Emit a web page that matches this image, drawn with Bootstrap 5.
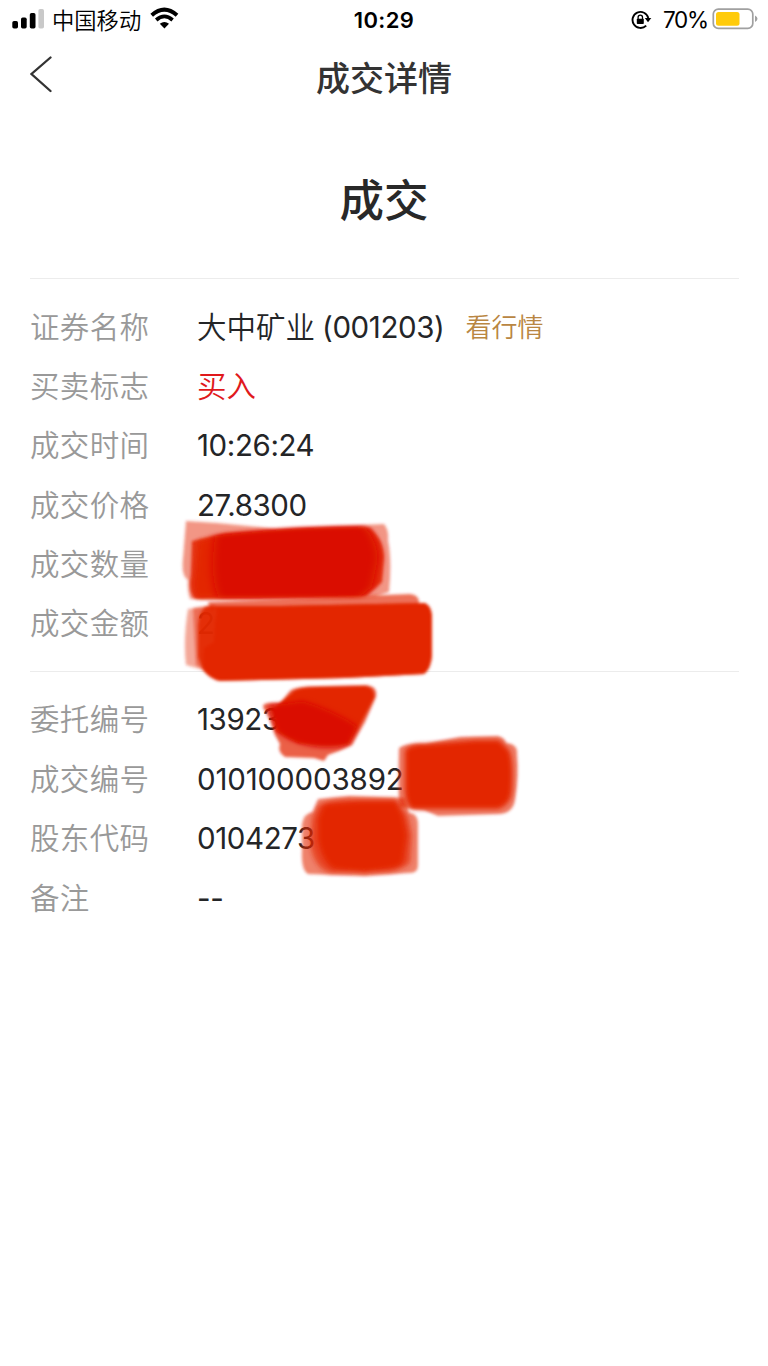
<!DOCTYPE html>
<html lang="zh-CN">
<head>
<meta charset="utf-8">
<meta name="viewport" content="width=device-width, initial-scale=1">
<title>成交详情</title>
<link href="https://cdn.jsdelivr.net/npm/bootstrap@5.3.0/dist/css/bootstrap.min.css" rel="stylesheet">
<style>
body{font-family:Inter,"Noto Sans CJK SC",sans-serif;color:#242527;min-height:1366px;overflow:hidden;background:#fff}
svg{display:block;flex:none}
.status{height:38px;color:#000;font-size:22px;line-height:38px}
.side{flex:1 1 0}
.status .side:first-child{padding-left:12px}
.status .side:last-child{padding-right:10px}
.carrier{margin-left:8px;margin-right:9px;font-size:22.3px;font-family:"Noto Sans CJK SC",sans-serif;font-weight:350}
.clock{font-weight:600;font-size:22px;letter-spacing:.4px;padding-top:1px;margin-left:-2px}
.pct{margin-left:11px;margin-right:4px;font-size:22.5px;letter-spacing:-1.2px;padding-top:1px}
.topbar{height:80px;padding:0 30px}
.topbar h1{font-size:34px;font-weight:500;color:#333;line-height:80px;padding-top:2px;margin-left:-2px}
.result{height:160px;font-size:44.5px;font-weight:500;line-height:166px;color:#282828}
.rule{height:1px;background:#ececec;margin:0 29px 0 30px}
.fields{padding-left:30px;padding-top:18.5px}
.fields-trade{padding-bottom:17px}
.field{height:59.4px;line-height:59.4px;font-size:29.5px}
.field dt{width:167px;font-weight:350;color:#999;letter-spacing:.35px}
.field dd{font-weight:350;white-space:nowrap;margin:0}
.field .num{font-family:Inter,sans-serif;font-weight:400;font-size:29.5px;letter-spacing:-.4px;line-height:58px}
.field .long{letter-spacing:-.15px}
.field .code{margin-left:7px}
.buy{color:#e0191c}
.field .quote{color:#b98642;font-size:26px;margin-left:21px}
.marker{left:0;top:0;pointer-events:none}
</style>
</head>
<body class="position-relative">
<header>
<div class="status d-flex align-items-center">
  <div class="side d-flex align-items-center">
    <svg width="32" height="38" viewBox="0 0 32 38"><rect x=".3" y="21" width="5.7" height="7.5" rx="1.7"/><rect x="9" y="17.5" width="5.7" height="11" rx="1.7"/><rect x="17.8" y="13" width="5.7" height="15.5" rx="1.7"/><rect x="26.4" y="9" width="5.6" height="19.5" rx="1.7" fill="#c9c9c9"/></svg>
    <span class="carrier">中国移动</span>
    <svg width="29" height="38" viewBox="0 0 29 38"><path d="M1.7 15.3Q14.3 4.1 27 15.3" fill="none" stroke="#000" stroke-width="4"/><path d="M6.2 20Q14.3 12.9 22.6 20" fill="none" stroke="#000" stroke-width="3.7"/><path d="M9.8 23.8Q14.4 20.2 19 23.8L14.4 28.5Z"/></svg>
  </div>
  <span class="clock">10:29</span>
  <div class="side d-flex align-items-center justify-content-end">
    <svg width="21" height="38" viewBox="0 0 21 38"><path d="M15.2 25.6A8 8 0 1 1 17.3 18" fill="none" stroke="#000" stroke-width="1.9"/><path d="M13.8 18h6.5l-3.3 4.2z"/><rect x="5.8" y="18.8" width="7" height="5.3" rx=".8"/><path d="M7.1 19v-1.7a2.2 2.2 0 0 1 4.4 0V19" fill="none" stroke="#000" stroke-width="1.3"/></svg>
    <span class="pct">70%</span>
    <svg width="46" height="38" viewBox="0 0 46 38"><rect x="1.3" y="9.1" width="39.5" height="19.3" rx="5" fill="#fff" stroke="#a0a0a0" stroke-width="1.7"/><rect x="4" y="12" width="23.5" height="13.7" rx="2.5" fill="#ffcb0b"/><path d="M43 15.5q5 3.2 0 6.6z" fill="#a0a0a0"/></svg>
  </div>
</div>
<nav class="topbar d-flex align-items-center">
  <div class="side"><svg width="24" height="44" viewBox="0 0 24 44"><path d="M20.5 1.5 1.5 18 20.5 35" fill="none" stroke="#333" stroke-width="2.3" stroke-linecap="round"/></svg></div>
  <h1 class="m-0">成交详情</h1>
  <div class="side"></div>
</nav>
</header>
<main>
<div class="result text-center">成交</div>
<div class="rule"></div>
<dl class="fields fields-trade m-0">
  <div class="field d-flex"><dt>证券名称</dt><dd>大中矿业</dd><dd class="num code">(001203)</dd><dd class="quote">看行情</dd></div>
  <div class="field d-flex"><dt>买卖标志</dt><dd class="buy">买入</dd></div>
  <div class="field d-flex"><dt>成交时间</dt><dd class="num">10:26:24</dd></div>
  <div class="field d-flex"><dt>成交价格</dt><dd class="num">27.8300</dd></div>
  <div class="field d-flex"><dt>成交数量</dt><dd class="num"></dd></div>
  <div class="field d-flex"><dt>成交金额</dt><dd class="num">2</dd></div>
</dl>
<div class="rule"></div>
<dl class="fields m-0">
  <div class="field d-flex"><dt>委托编号</dt><dd class="num">13923</dd></div>
  <div class="field d-flex"><dt>成交编号</dt><dd class="num long">010100003892</dd></div>
  <div class="field d-flex"><dt>股东代码</dt><dd class="num">0104273</dd></div>
  <div class="field d-flex"><dt>备注</dt><dd class="num">--</dd></div>
</dl>
</main>
<!-- marker strokes over the private values -->
<svg class="marker position-absolute" width="768" height="960" viewBox="0 0 768 960">
<defs><filter id="soft" x="-10%" y="-10%" width="120%" height="120%"><feGaussianBlur stdDeviation="1.8"/></filter><filter id="mid" x="-15%" y="-15%" width="130%" height="130%"><feGaussianBlur stdDeviation="2.5"/></filter><filter id="softer" x="-15%" y="-15%" width="130%" height="130%"><feGaussianBlur stdDeviation="5 2"/></filter></defs>
<g fill="#e32603">
  <g filter="url(#soft)">
    <path d="M186 521Q230 523 275 529Q330 526 384 524Q389 530 388 540Q392 560 389 592L375 597 250 600 190 599Q187 590 188 580Q181 576 183 558Z" opacity=".48"/>
    <path d="M192 541 225 534Q300 528 370 528Q384 540 384 558L382 582 366 596 195 599Q188 592 191 575Z" opacity=".85"/>
  </g>
  <path d="M198 541 225 534Q300 528 365 528Q380 540 380 558L377 582 363 595 198 598Q192 590 195 575Z" filter="url(#mid)"/>
  <path d="M215 536Q290 527 365 527Q378 541 378 560L372 587 360 597 218 597Q209 575 215 536Z" fill="#da0800" filter="url(#softer)"/>
</g>
<g filter="url(#soft)" fill="#e32603">
  <path d="M208 602 410 594Q420 595 419 604L210 610Z" opacity=".65"/>
  <path d="M188 609 215 605 215 676 200 669 186 665Q183 640 188 609Z" opacity=".4"/>
  <path d="M193 608 215 605 215 676 196 665Z" opacity=".45"/>
  <path d="M206 606 280 606 425 603Q433 607 432 622L432 655Q431 669 424 674L345 678 220 681Q210 679 203 670L198 657 198 625Q199 612 206 606Z" opacity=".9"/>
  <path d="M216 606 280 606 425 603Q433 607 432 622L432 655Q431 669 424 674L345 678 220 681Q210 679 203 670L204 648 214 642Z"/>
  <path d="M290 691Q295 686 320 686L366 685Q378 686 376 697L365 722 352 745Q340 751 328 755L324 761 314 758 285 757Q277 752 280 744L275 735 270 720 263 707Q262 702 280 703Z" opacity=".72"/>
  <path d="M292 693Q296 687 320 687L364 686Q375 687 374 698L360 725 348 744 298 743 276 731 277 705Z"/>
</g>
<path d="M268 706 303 701Q335 711 357 726L349 744Q334 750 311 746Q289 742 277 731Z" fill="#da0800" filter="url(#mid)"/>
<g filter="url(#soft)" fill="#e32603">
  <path d="M399 748Q406 743 425 744L460 737 498 736Q505 738 506 743Q518 744 517 754Q519 775 515 800Q513 813 500 814L438 816 424 810 399 807Q398 775 399 748Z" opacity=".6"/>
  <path d="M318 799 350 796 405 798 409 813Q418 813 418 825L418 865Q418 874 408 873L365 876 308 874Q301 870 302 850L302 824Q304 813 313 812Z" opacity=".58"/>
</g>
<g filter="url(#mid)" fill="#e32603">
  <path d="M405 750Q411 743 427 744L475 740 499 740 509 750Q514 760 512 790Q511 805 498 809L412 809Q405 804 405 790Z"/>
  <path d="M318 805Q330 799 350 799L396 799 408 816 412 835 410 863Q400 871 388 872L330 873Q312 867 310 840L312 818Z" opacity=".65"/>
  <path d="M324 804 360 801 396 801 403 816 407 835 403 862Q400 868 388 869L365 873 334 869Q322 862 318 840L318 818Z"/>
</g>
</svg>
<script src="https://cdn.jsdelivr.net/npm/bootstrap@5.3.0/dist/js/bootstrap.bundle.min.js"></script>
</body>
</html>
